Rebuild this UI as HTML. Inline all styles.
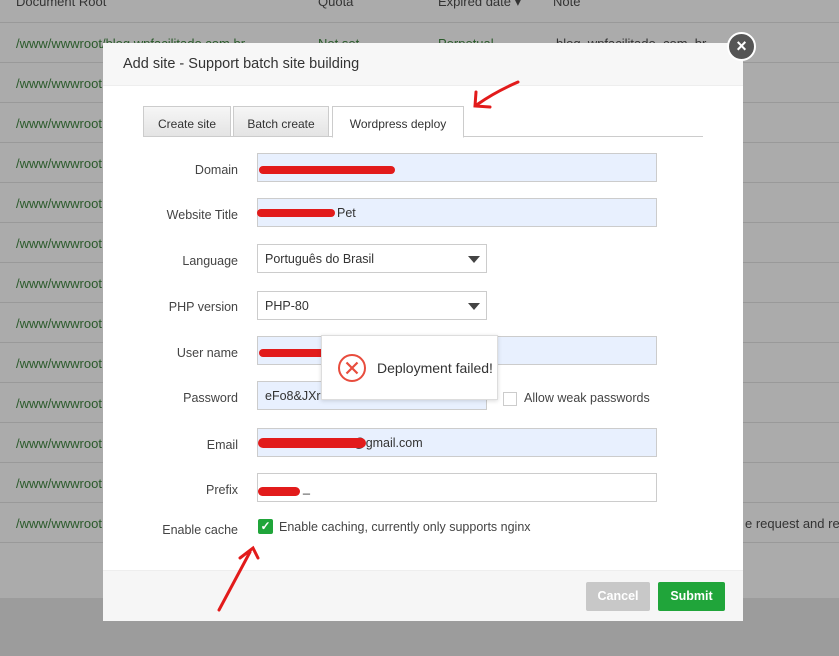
<!DOCTYPE html>
<html><head><meta charset="utf-8"><style>
*{box-sizing:border-box;margin:0;padding:0}
body{width:839px;height:656px;overflow:hidden;position:relative;background:#ababab;font-family:"Liberation Sans",sans-serif;font-size:13px;color:#333;white-space:nowrap}
.row{position:absolute;left:0;width:839px;height:40px;border-bottom:1px solid #999;}
.row span{position:absolute;top:13px;color:#2a5a2a}
.hdr{position:absolute;top:-6px;color:#333;font-size:13px}
.modal{position:absolute;left:103px;top:43px;width:640px;height:578px;background:#fff}
.mh{height:43px;background:#f7f7f7;border-bottom:1px solid #eee;padding:13px 20px;font-size:14.5px;color:#333}
.tab{position:absolute;top:63px;height:31px;border:1px solid #ccc;background:linear-gradient(#f6f6f6,#e4e4e4);font-size:12px;padding:10px 0 0;text-align:center;color:#333}
.lbl{position:absolute;right:505px;font-size:12.5px;color:#444;text-align:right}
.inp{position:absolute;left:154px;height:29px;border:1px solid #ccc;background:#e8f0fe;font-size:12.5px;padding:7px 7px;color:#333}
.red{position:absolute;height:8px;background:#e21b1b;border-radius:5px}
.foot{position:absolute;left:0;top:527px;width:640px;height:51px;background:#f6f6f6;border-top:1px solid #eee}
.btn{position:absolute;top:11px;height:29px;color:#fff;font-weight:bold;font-size:12.5px;text-align:center;line-height:29px;border-radius:2px}
</style></head><body>
<div class="hdr" style="left:16px">Document Root</div>
<div class="hdr" style="left:318px">Quota</div>
<div class="hdr" style="left:438px">Expired date ▾</div>
<div class="hdr" style="left:553px">Note</div>
<div style="position:absolute;left:0;top:22px;width:839px;border-top:1px solid #999"></div>
<div class="row" style="top:23px"><span style="left:16px">/www/wwwroot/blog.wpfacilitado.com.br</span><span style="left:318px">Not set</span><span style="left:438px">Perpetual</span><span style="left:556px;color:#333">blog_wpfacilitado_com_br</span></div>
<div class="row" style="top:63px"><span style="left:16px">/www/wwwroot</span></div>
<div class="row" style="top:103px"><span style="left:16px">/www/wwwroot</span></div>
<div class="row" style="top:143px"><span style="left:16px">/www/wwwroot</span></div>
<div class="row" style="top:183px"><span style="left:16px">/www/wwwroot</span></div>
<div class="row" style="top:223px"><span style="left:16px">/www/wwwroot</span></div>
<div class="row" style="top:263px"><span style="left:16px">/www/wwwroot</span></div>
<div class="row" style="top:303px"><span style="left:16px">/www/wwwroot</span></div>
<div class="row" style="top:343px"><span style="left:16px">/www/wwwroot</span></div>
<div class="row" style="top:383px"><span style="left:16px">/www/wwwroot</span></div>
<div class="row" style="top:423px"><span style="left:16px">/www/wwwroot</span></div>
<div class="row" style="top:463px"><span style="left:16px">/www/wwwroot</span></div>
<div class="row" style="top:503px"><span style="left:16px">/www/wwwroot</span><span style="left:745px;color:#333">e request and ren</span></div>
<div style="position:absolute;left:0;top:598px;width:839px;height:58px;background:#9c9c9c"></div>

<div class="modal">
<div class="mh">Add site - Support batch site building</div>
<div style="position:absolute;left:40px;top:93px;width:560px;border-top:1px solid #ccc"></div>
<div class="tab" style="left:40px;width:88px">Create site</div>
<div class="tab" style="left:130px;width:96px">Batch create</div>
<div class="tab" style="left:229px;width:132px;background:#fff;border-bottom-color:#fff;height:32px">Wordpress deploy</div>

<div class="lbl" style="top:120px">Domain</div>
<div class="inp" style="top:110px;width:400px"></div><div class="red" style="left:156px;top:123px;width:136px"></div>
<div class="lbl" style="top:165px">Website Title</div>
<div class="inp" style="top:155px;width:400px"><span style="margin-left:72px">Pet</span></div><div class="red" style="left:154px;top:166px;width:78px"></div>
<div class="lbl" style="top:211px">Language</div>
<div class="inp" style="top:201px;width:230px;background:#fff">Português do Brasil<span style="position:absolute;right:6px;top:11px;border:6px solid transparent;border-top:7px solid #444"></span></div>
<div class="lbl" style="top:257px">PHP version</div>
<div class="inp" style="top:248px;width:230px;background:#fff">PHP-80<span style="position:absolute;right:6px;top:11px;border:6px solid transparent;border-top:7px solid #444"></span></div>
<div class="lbl" style="top:303px">User name</div>
<div class="inp" style="top:293px;width:400px"></div><div class="red" style="left:156px;top:306px;width:66px"></div>
<div class="lbl" style="top:348px">Password</div>
<div class="inp" style="top:338px;width:230px">eFo8&amp;JXr</div>
<div style="position:absolute;left:400px;top:349px;width:14px;height:14px;border:1px solid #ccc;background:#fff"></div>
<div style="position:absolute;left:421px;top:348px;font-size:12.5px;color:#444">Allow weak passwords</div>
<div class="lbl" style="top:395px">Email</div>
<div class="inp" style="top:385px;width:400px"><span style="margin-left:88px">@gmail.com</span></div><div class="red" style="left:155px;top:395px;width:108px;height:10px"></div>
<div class="lbl" style="top:440px">Prefix</div>
<div class="inp" style="top:430px;width:400px;background:#fff"><span style="margin-left:38px">_</span></div><div class="red" style="left:155px;top:444px;width:42px;height:9px"></div>
<div class="lbl" style="top:480px">Enable cache</div>
<div style="position:absolute;left:155px;top:476px;width:15px;height:15px;background:#20a53a;border-radius:2px;color:#fff;font-size:12px;line-height:15px;text-align:center;font-weight:bold">✓</div>
<div style="position:absolute;left:176px;top:477px;font-size:12.5px;color:#444">Enable caching, currently only supports nginx</div>

<div style="position:absolute;left:218px;top:292px;width:177px;height:65px;background:#fff;border:1px solid #ddd;box-shadow:0 1px 4px rgba(0,0,0,.15)">
<svg style="position:absolute;left:15px;top:17px" width="30" height="30" viewBox="0 0 30 30"><circle cx="15" cy="15" r="13" fill="none" stroke="#e84c3d" stroke-width="2"/><path d="M9.5 9.5L20.5 20.5M20.5 9.5L9.5 20.5" stroke="#e84c3d" stroke-width="2.2"/></svg>
<div style="position:absolute;left:55px;top:24px;font-size:14px;color:#333">Deployment failed!</div></div>

<div class="foot">
<div class="btn" style="left:483px;width:64px;background:#c8c8c8">Cancel</div>
<div class="btn" style="left:555px;width:67px;background:#20a53a">Submit</div>
</div>
</div>
<div style="position:absolute;left:727px;top:32px;width:29px;height:29px;border-radius:50%;background:#555;border:2px solid #fff;color:#fff;text-align:center;line-height:24px;font-size:18px;font-weight:bold">×</div>
<svg style="position:absolute;left:0;top:0" width="839" height="656"><path d="M518 82Q495 92 478 104M476 92L475 106L490 107" stroke="#e21b1b" stroke-width="3" fill="none" stroke-linecap="round"/><path d="M219 610Q235 580 250 552M240 558L253 548L258 558" stroke="#e21b1b" stroke-width="3" fill="none" stroke-linecap="round"/></svg>
</body></html>
